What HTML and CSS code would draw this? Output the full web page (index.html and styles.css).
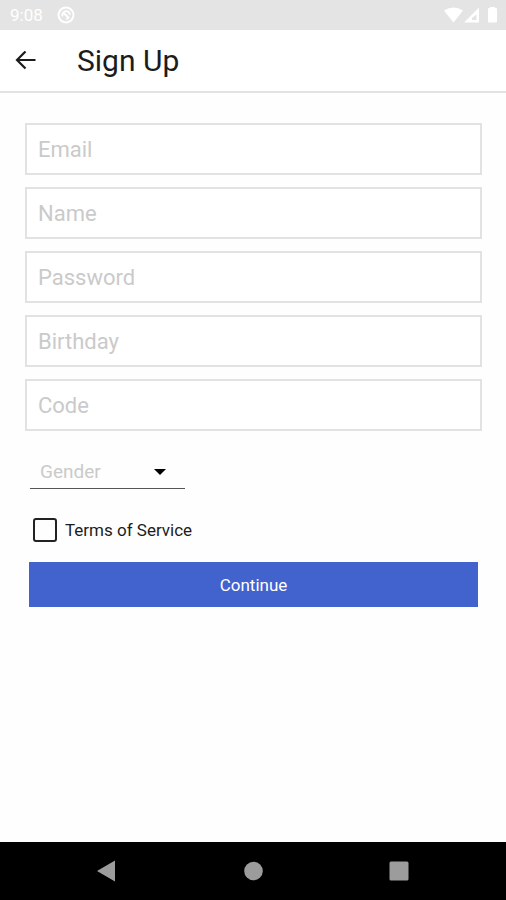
FILE: index.html
```html
<!DOCTYPE html>
<html lang="en">
<head>
<meta charset="utf-8">
<meta name="viewport" content="width=device-width, initial-scale=1">
<title>Sign Up</title>
<link rel="stylesheet" href="styles.css">
</head>
<body>
<div class="status-bar">
  <span class="clock">9:08</span>
  <svg class="status-app" width="18" height="18" viewBox="0 0 18 18" aria-hidden="true">
    <circle cx="9" cy="9" r="7.5" fill="none" stroke="currentColor" stroke-width="2"/>
    <path d="M5.5 10.5A4 4 0 0 1 9 5.2a4 4 0 0 1 3.8 3.6M6.5 7l5.5 5M9 12.8a4 4 0 0 0 3.2-1.5" fill="none" stroke="currentColor" stroke-width="1.8"/>
  </svg>
  <svg class="status-system" width="54" height="18" viewBox="0 0 54 18" aria-hidden="true">
    <path d="M0 4.5Q9.500-1.500 19 4.500L9.500 16.500Z" fill="currentColor"/>
    <path d="M35 1.500V16.500H20Z" fill="currentColor"/>
    <path d="M32.500 8.500V14H28V12Z" fill="#e4e4e4"/>
    <path d="M45 2H46V1H51V2H52Q53 2 53 3V15.500Q53 16.500 52 16.500H45Q44 16.500 44 15.500V3Q44 2 45 2Z" fill="currentColor"/>
  </svg>
</div>
<header class="app-bar">
  <button class="back" type="button" aria-label="Back">
    <svg width="22" height="20" viewBox="0 0 22 20" aria-hidden="true">
      <path d="M20.500 9H2M10.500 0.500L2 9L10.500 17.500" fill="none" stroke="currentColor" stroke-width="2.200"/>
    </svg>
  </button>
  <h1 class="title">Sign Up</h1>
</header>
<main class="content">
  <form class="form">
    <div class="fields">
      <input class="field" type="email" placeholder="Email" aria-label="Email">
      <input class="field" type="text" placeholder="Name" aria-label="Name">
      <input class="field" type="password" placeholder="Password" aria-label="Password">
      <input class="field" type="text" placeholder="Birthday" aria-label="Birthday">
      <input class="field" type="text" placeholder="Code" aria-label="Code">
    </div>
    <div class="options">
      <div class="gender">
        <select class="gender-select" aria-label="Gender">
          <option>Gender</option>
        </select>
        <svg class="caret" width="12" height="6" viewBox="0 0 12 6" aria-hidden="true"><path d="M0 0H12L6 6Z"/></svg>
      </div>
      <label class="terms">
        <input class="terms-box" type="checkbox">
        <span>Terms of Service</span>
      </label>
      <button class="submit" type="button">Continue</button>
    </div>
  </form>
</main>
<nav class="nav-bar">
  <button class="nav-button" type="button" aria-label="Back">
    <svg width="20" height="22" viewBox="0 0 20 22" aria-hidden="true"><path d="M0 11L18 0.500V21.500Z"/></svg>
  </button>
  <button class="nav-button" type="button" aria-label="Home">
    <svg width="20" height="20" viewBox="0 0 20 20" aria-hidden="true"><circle cx="10.500" cy="10" r="9.300"/></svg>
  </button>
  <button class="nav-button" type="button" aria-label="Recent apps">
    <svg width="20" height="20" viewBox="0 0 20 20" aria-hidden="true"><rect x="0.500" y="0.500" width="19" height="19" rx="1.500"/></svg>
  </button>
</nav>
</body>
</html>
```
FILE: styles.css
```css
* {
  box-sizing: border-box;
}

body {
  display: flex;
  flex-direction: column;
  min-height: 100vh;
  margin: 0;
  background: #fefefe;
  color: #1c1c1c;
  font-family: Roboto, "Liberation Sans", sans-serif;
}

button {
  padding: 0;
  border: 0;
  background: none;
  color: inherit;
  font: inherit;
  cursor: pointer;
}

svg {
  display: block;
}

.status-bar {
  display: flex;
  align-items: center;
  height: 30px;
  padding: 0 8px 0 10px;
  background: #e4e4e4;
  color: #fff;
}

.clock {
  font-size: 17px;
  line-height: 20px;
}

.status-app {
  margin-left: 14px;
}

.status-system {
  margin-left: auto;
}

.app-bar {
  display: flex;
  align-items: center;
  gap: 40px;
  height: 63px;
  padding: 0 15px;
  border-bottom: 2px solid #e2e2e2;
  background: #fff;
}

.title {
  margin: 0;
  font-size: 30px;
  font-weight: 400;
  line-height: 36px;
}

.content {
  flex: 1;
  padding: 30px 24px 30px 25px;
}

.fields {
  display: grid;
  gap: 12px;
}

.field {
  width: 100%;
  height: 52px;
  padding: 0 11px;
  border: 2px solid #e2e2e2;
  border-radius: 0;
  background: #fff;
  color: inherit;
  font: 22px/28px Roboto, "Liberation Sans", sans-serif;
}

.field::placeholder {
  color: #cacaca;
  opacity: 1;
}

.options {
  display: flex;
  flex-direction: column;
  align-items: flex-start;
  padding: 24px 4px 0;
}

.gender {
  position: relative;
  width: 155px;
  margin-left: 1px;
}

.gender-select {
  display: block;
  width: 100%;
  height: 34px;
  padding: 0 10px;
  border: 0;
  border-bottom: 1px solid #555;
  border-radius: 0;
  appearance: none;
  background: transparent;
  color: #cacaca;
  font: 19px/28px Roboto, "Liberation Sans", sans-serif;
}

.caret {
  position: absolute;
  top: 14px;
  right: 19px;
  pointer-events: none;
}

.terms {
  display: flex;
  align-items: center;
  gap: 8px;
  margin: 29px 0 20px 4px;
  font-size: 17px;
  line-height: 24px;
}

.terms-box {
  width: 24px;
  height: 24px;
  margin: 0;
  border: 2px solid #222;
  border-radius: 3px;
  appearance: none;
}

.terms-box:checked {
  background: #4263ce;
}

.submit {
  width: 100%;
  height: 45px;
  background: #4263ce;
  color: #fff;
  font-size: 17px;
  line-height: 24px;
}

.nav-bar {
  display: grid;
  grid-template-columns: repeat(3, 146px);
  justify-content: center;
  height: 58px;
  background: #000;
}

.nav-button {
  display: grid;
  place-items: center;
  fill: #9c9c9c;
}
```
